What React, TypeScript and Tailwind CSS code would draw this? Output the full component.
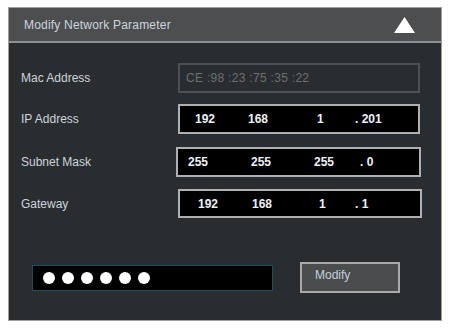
const rows = [
  {
    label: 'IP Address',
    labelW: 'w-[157px]',
    fieldW: 'w-[242px] h-[30px]',
    pad: 'pl-[15px]',
    parts: [
      { text: '192', w: 'w-[53px]' },
      { text: '168', w: 'w-[69px]' },
      { text: '1', w: 'w-[38px]' },
      { text: '. 201', w: '' },
    ],
  },
  {
    label: 'Subnet Mask',
    labelW: 'w-[155px]',
    fieldW: 'w-[245px] h-[30px]',
    pad: 'pl-[10px]',
    parts: [
      { text: '255', w: 'w-[63px]' },
      { text: '255', w: 'w-[63px]' },
      { text: '255', w: 'w-[46px]' },
      { text: '. 0', w: '' },
    ],
  },
  {
    label: 'Gateway',
    labelW: 'w-[157px]',
    fieldW: 'w-[244px] h-[29px]',
    pad: 'pl-[18px]',
    parts: [
      { text: '192', w: 'w-[54px]' },
      { text: '168', w: 'w-[67px]' },
      { text: '1', w: 'w-[36px]' },
      { text: '. 1', w: '' },
    ],
  },
]

export default function App() {
  return (
    <div className="w-[450px] h-[330px] bg-white pl-[8px] pt-[7px] font-['Liberation_Sans',Arial,sans-serif]">
      <div className="w-[434px] h-[314px] border border-[#9e9e9e] bg-[#2a2d2f] flex flex-col">
        {/* Header */}
        <div className="h-[35px] shrink-0 bg-[#4c4e4f] border-b-2 border-[#8a9094] flex items-center justify-between pl-[15px] pr-[26px]">
          <span className="text-[12px] text-[#cdd6de] tracking-[0.2px]">Modify Network Parameter</span>
          <svg width="21" height="16" viewBox="0 0 21 16">
            <polygon points="10.5,0 21,16 0,16" fill="#ffffff" />
          </svg>
        </div>

        {/* Body */}
        <div className="flex flex-col pl-[12px] pt-[20px]">
          <div className="flex items-center">
            <span className="w-[157px] text-[12px] text-[#cdd5dc]">Mac Address</span>
            <div className="w-[242px] h-[30px] border-2 border-[#4d5154] flex items-center pl-[6px] text-[12px] text-[#6c7073] tracking-[0.3px]">
              CE :98 :23 :75 :35 :22
            </div>
          </div>

          {rows.map((r, i) => (
            <div
              key={r.label}
              className={`flex items-center ${i === 0 ? 'mt-[11px]' : i === 1 ? 'mt-[13px]' : 'mt-[12px]'}`}
            >
              <span className={`${r.labelW} text-[12px] text-[#cdd5dc]`}>{r.label}</span>
              <div className={`${r.fieldW} ${r.pad} border-2 border-[#aeb0b1] bg-black flex items-center text-[12px] font-bold text-[#eef2f5]`}>
                {r.parts.map((p, j) => (
                  <span key={j} className={`${p.w} whitespace-pre`}>
                    {p.text}
                  </span>
                ))}
              </div>
            </div>
          ))}

          {/* Password + button */}
          <div className="flex items-center mt-[44px] pl-[11px]">
            <div className="w-[241px] h-[26px] bg-black border border-[#1f4d5c] flex items-center gap-[7px] pl-[10px]">
              {[0, 1, 2, 3, 4, 5].map((d) => (
                <span key={d} className="w-[12px] h-[12px] rounded-full bg-white" />
              ))}
            </div>
            <button className="ml-[27px] w-[100px] h-[31px] bg-[#4a4c4d] border-2 border-[#a8aaab] text-left pl-[13px] pb-[6px] text-[12px] text-[#c5d2dc]">
              Modify
            </button>
          </div>
        </div>
      </div>
    </div>
  )
}
